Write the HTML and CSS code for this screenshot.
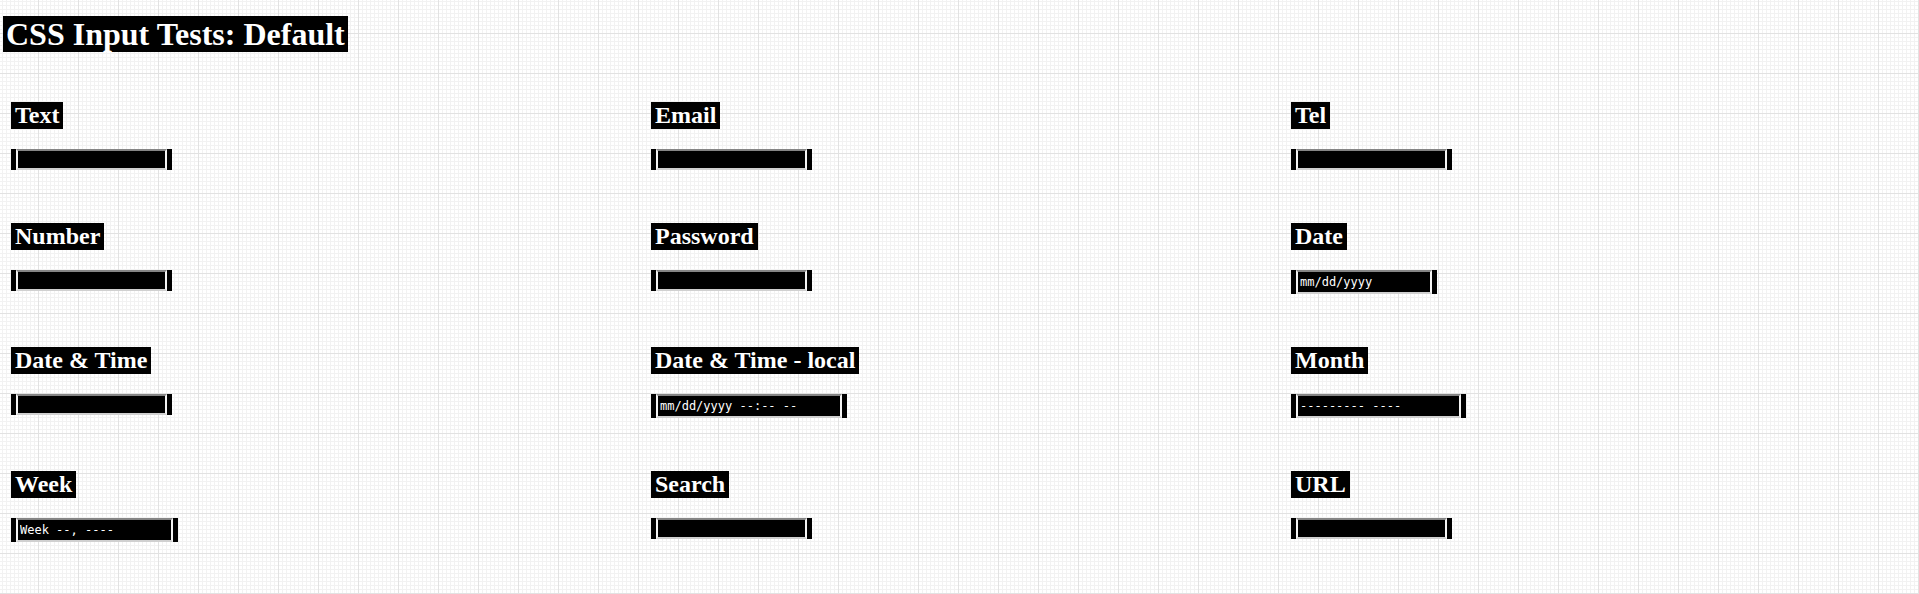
FILE: index.html
```html
<!DOCTYPE html>
<html lang="en">
<head>
<meta charset="utf-8">
<title>CSS Input Tests: Default</title>
<link rel="stylesheet" href="styles.css">
</head>
<body>
<h1 class="title">CSS Input Tests: Default</h1>
<div class="grid">
  <div class="cell"><label class="lbl" for="f1">Text</label><input class="fld" id="f1" type="text"></div>
  <div class="cell"><label class="lbl" for="f2">Email</label><input class="fld" id="f2" type="email"></div>
  <div class="cell"><label class="lbl" for="f3">Tel</label><input class="fld" id="f3" type="tel"></div>
  <div class="cell"><label class="lbl" for="f4">Number</label><input class="fld" id="f4" type="text"></div>
  <div class="cell"><label class="lbl" for="f5">Password</label><input class="fld" id="f5" type="password"></div>
  <div class="cell"><label class="lbl" for="f6">Date</label><input class="fld tall w-date" id="f6" type="text" value="mm/dd/yyyy" readonly></div>
  <div class="cell"><label class="lbl" for="f7">Date &amp; Time</label><input class="fld" id="f7" type="text"></div>
  <div class="cell"><label class="lbl" for="f8">Date &amp; Time - local</label><input class="fld tall w-dtl" id="f8" type="text" value="mm/dd/yyyy --:-- --" readonly></div>
  <div class="cell"><label class="lbl" for="f9">Month</label><input class="fld tall w-month" id="f9" type="text" value="--------- ----" readonly></div>
  <div class="cell"><label class="lbl" for="f10">Week</label><input class="fld tall w-week" id="f10" type="text" value="Week --, ----" readonly></div>
  <div class="cell"><label class="lbl" for="f11">Search</label><input class="fld" id="f11" type="search"></div>
  <div class="cell"><label class="lbl" for="f12">URL</label><input class="fld" id="f12" type="url"></div>
</div>
</body>
</html>
```
FILE: styles.css
```css
html {
  background-color: #fff;
  background-image:
    linear-gradient(to right, #e2e2e2 1px, transparent 1px),
    linear-gradient(to bottom, #e2e2e2 1px, transparent 1px),
    linear-gradient(to right, #f2f2f2 1px, transparent 1px),
    linear-gradient(to bottom, #f2f2f2 1px, transparent 1px);
  background-size: 40px 40px, 40px 40px, 4px 4px, 4px 4px;
  background-position: 38px 33px, 38px 33px, 38px 33px, 38px 33px;
  min-height: 100%;
}
body {
  margin: 0;
  overflow: hidden;
  font-family: "Liberation Serif", "Times New Roman", serif;
}
.title {
  display: inline-block;
  margin: 16px 0 0 3px;
  padding: 0 3px;
  background: #000;
  color: #fff;
  font-size: 32px;
  font-weight: bold;
  line-height: 36px;
  vertical-align: top;
}
.grid {
  display: grid;
  grid-template-columns: 640px 640px 1fr;
  row-gap: 53px;
  margin: 50px 0 0 11px;
  align-items: start;
}
.cell {
  display: flex;
  flex-direction: column;
  align-items: flex-start;
}
.lbl {
  display: inline-block;
  background: #000;
  color: #fff;
  font-size: 24px;
  font-weight: bold;
  line-height: 27px;
  padding: 0 4px;
  margin-bottom: 20px;
}
.fld {
  display: block;
  box-sizing: border-box;
  width: 151px;
  height: 21px;
  margin: 0 0 0 5px;
  padding: 1px 2px;
  border: 2px solid;
  border-color: #858585 #f4f4f4 #d0d0d0 #f4f4f4;
  background: #000;
  color: #fff;
  font-family: "DejaVu Sans Mono", monospace;
  font-size: 12px;
  box-shadow: -5px 0 0 #000, 5px 0 0 #000;
  outline: none;
}
.tall {
  height: 24px;
}
.w-date { width: 136px; }
.w-dtl { width: 186px; }
.w-month { width: 165px; }
.w-week { width: 157px; }
```
